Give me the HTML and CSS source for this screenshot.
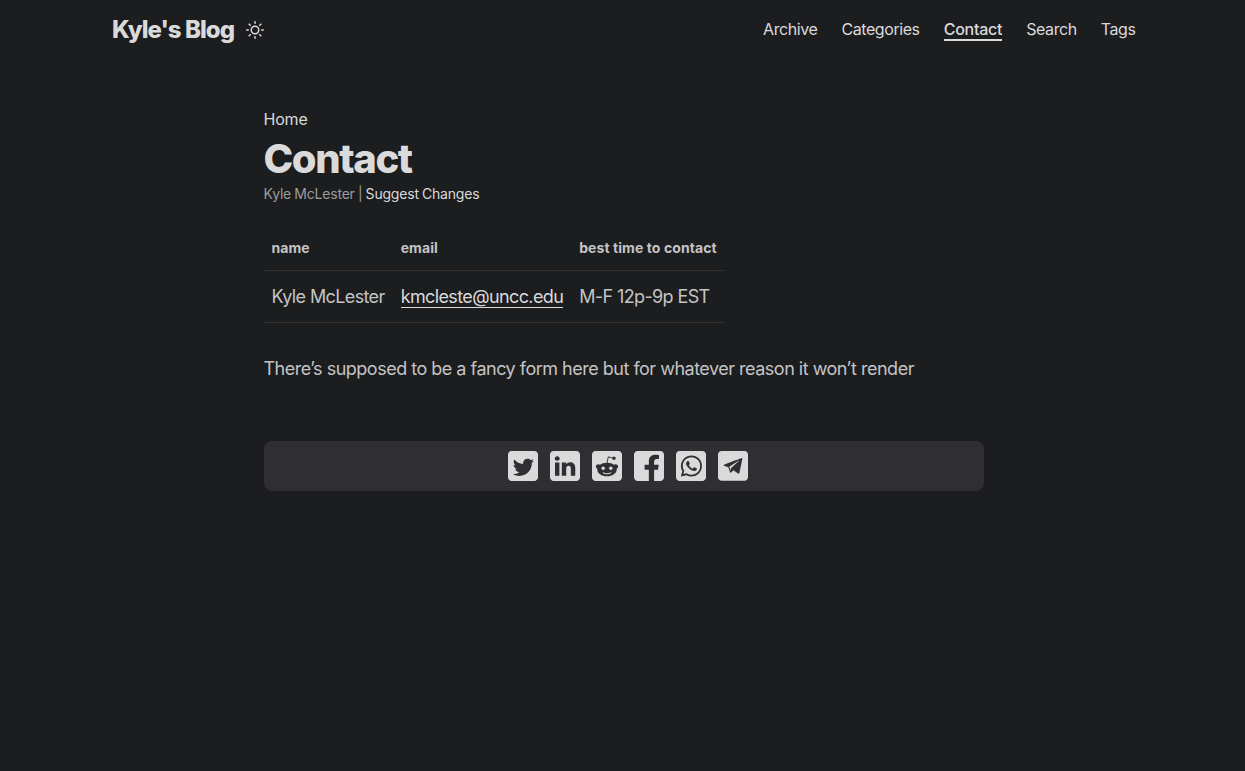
FILE: index.html
```html
<!DOCTYPE html>
<html lang="en">
<head>
  <meta charset="UTF-8" />
  <title>Contact | Kyle's Blog</title>
  <link rel="stylesheet" href="styles.css">
</head>
<body>

  <header class="header">
    <nav class="nav">
      <div class="logo">
        <a href="#">Kyle's Blog</a>
        <button class="theme-toggle" aria-label="Toggle theme">
          <svg viewBox="0 0 24 24" width="18" height="18" fill="none" stroke="currentColor" stroke-width="2" stroke-linecap="round" stroke-linejoin="round">
            <circle cx="12" cy="12" r="5"></circle>
            <line x1="12" y1="1" x2="12" y2="3"></line>
            <line x1="12" y1="21" x2="12" y2="23"></line>
            <line x1="4.22" y1="4.22" x2="5.64" y2="5.64"></line>
            <line x1="18.36" y1="18.36" x2="19.78" y2="19.78"></line>
            <line x1="1" y1="12" x2="3" y2="12"></line>
            <line x1="21" y1="12" x2="23" y2="12"></line>
            <line x1="4.22" y1="19.78" x2="5.64" y2="18.36"></line>
            <line x1="18.36" y1="5.64" x2="19.78" y2="4.22"></line>
          </svg>
        </button>
      </div>
      <ul class="menu">
        <li><a href="#">Archive</a></li>
        <li><a href="#">Categories</a></li>
        <li><a href="#" class="active">Contact</a></li>
        <li><a href="#">Search</a></li>
        <li><a href="#">Tags</a></li>
      </ul>
    </nav>
  </header>

  <main class="main">
    <div class="breadcrumbs"><a href="#">Home</a></div>
    <h1 class="post-title">Contact</h1>
    <div class="post-meta">Kyle McLester&nbsp;|&nbsp;<a href="#">Suggest Changes</a></div>

    <div class="post-content">
      <table class="contact-table">
        <thead>
          <tr>
            <th>name</th>
            <th>email</th>
            <th>best time to contact</th>
          </tr>
        </thead>
        <tbody>
          <tr>
            <td>Kyle McLester</td>
            <td><a href="#">kmcleste@uncc.edu</a></td>
            <td>M-F 12p-9p EST</td>
          </tr>
        </tbody>
      </table>
      <p>There’s supposed to be a fancy form here but for whatever reason it won’t render</p>
    </div>

    <div class="share-buttons">
      <a href="#" aria-label="share on twitter">
        <svg viewBox="0 0 512 512"><path d="M449.446,0c34.525,0 62.554,28.03 62.554,62.554l0,386.892c0,34.524 -28.03,62.554 -62.554,62.554l-386.892,0c-34.524,0 -62.554,-28.03 -62.554,-62.554l0,-386.892c0,-34.524 28.029,-62.554 62.554,-62.554l386.892,0Zm-253.927,424.544c135.939,0 210.268,-112.643 210.268,-210.268c0,-3.218 0,-6.437 -0.153,-9.502c14.406,-10.421 26.973,-23.448 36.935,-38.314c-13.18,5.824 -27.433,9.809 -42.452,11.648c15.326,-9.196 26.973,-23.602 32.49,-40.92c-14.252,8.429 -30.038,14.56 -46.896,17.931c-13.487,-14.406 -32.644,-23.295 -53.946,-23.295c-40.767,0 -73.87,33.104 -73.87,73.87c0,5.824 0.613,11.494 1.992,16.858c-61.456,-3.065 -115.862,-32.49 -152.337,-77.241c-6.284,10.881 -9.962,23.601 -9.962,37.088c0,25.594 13.027,48.276 32.95,61.456c-12.107,-0.307 -23.448,-3.678 -33.41,-9.196l0,0.92c0,35.862 25.441,65.594 59.311,72.49c-6.13,1.686 -12.72,2.606 -19.464,2.606c-4.751,0 -9.348,-0.46 -13.946,-1.38c9.349,29.426 36.628,50.728 68.965,51.341c-25.287,19.771 -57.164,31.571 -91.8,31.571c-5.977,0 -11.801,-0.306 -17.625,-1.073c32.337,21.15 71.264,33.41 112.95,33.41Z"/></svg>
      </a>
      <a href="#" aria-label="share on linkedin">
        <svg viewBox="0 0 512 512"><path d="M449.446,0c34.525,0 62.554,28.03 62.554,62.554l0,386.892c0,34.524 -28.03,62.554 -62.554,62.554l-386.892,0c-34.524,0 -62.554,-28.03 -62.554,-62.554l0,-386.892c0,-34.524 28.029,-62.554 62.554,-62.554l386.892,0Zm-288.985,423.278l0,-225.717l-75.04,0l0,225.717l75.04,0Zm270.539,0l0,-129.439c0,-69.333 -37.018,-101.586 -86.381,-101.586c-39.804,0 -57.634,21.891 -67.617,37.266l0,-31.958l-75.021,0c0.995,21.181 0,225.717 0,225.717l75.02,0l0,-126.056c0,-6.748 0.486,-13.492 2.474,-18.315c5.414,-13.475 17.767,-27.434 38.494,-27.434c27.135,0 38.007,20.707 38.007,51.037l0,120.768l75.024,0Zm-307.552,-334.556c-25.674,0 -42.448,16.879 -42.448,39.002c0,21.658 16.264,39.002 41.455,39.002l0.484,0c26.165,0 42.452,-17.344 42.452,-39.002c-0.485,-22.092 -16.241,-38.954 -41.943,-39.002Z"/></svg>
      </a>
      <a href="#" aria-label="share on reddit">
        <svg viewBox="0 0 512 512"><path d="M449.446,0c34.525,0 62.554,28.03 62.554,62.554l0,386.892c0,34.524 -28.03,62.554 -62.554,62.554l-386.892,0c-34.524,0 -62.554,-28.03 -62.554,-62.554l0,-386.892c0,-34.524 28.029,-62.554 62.554,-62.554l386.892,0Zm-3.446,265.638c0,-22.964 -18.616,-41.58 -41.58,-41.58c-11.211,0 -21.361,4.457 -28.841,11.666c-28.424,-20.508 -67.586,-33.757 -111.204,-35.278l18.941,-89.121l61.884,13.157c0.756,15.734 13.642,28.29 29.56,28.29c16.407,0 29.706,-13.299 29.706,-29.701c0,-16.403 -13.299,-29.702 -29.706,-29.702c-11.666,0 -21.657,6.792 -26.515,16.578l-69.105,-14.69c-1.922,-0.418 -3.939,-0.042 -5.585,1.036c-1.658,1.073 -2.811,2.761 -3.224,4.686l-21.152,99.438c-44.258,1.228 -84.046,14.494 -112.837,35.232c-7.468,-7.164 -17.589,-11.591 -28.757,-11.591c-22.965,0 -41.585,18.616 -41.585,41.58c0,16.896 10.095,31.41 24.568,37.918c-0.639,4.135 -0.99,8.328 -0.99,12.576c0,63.977 74.469,115.836 166.33,115.836c91.861,0 166.334,-51.859 166.334,-115.836c0,-4.218 -0.347,-8.387 -0.977,-12.493c14.564,-6.47 24.735,-21.034 24.735,-38.001Zm-119.474,108.193c-20.27,20.241 -59.115,21.816 -70.534,21.816c-11.428,0 -50.277,-1.575 -70.522,-21.82c-3.007,-3.008 -3.007,-7.882 0,-10.889c3.003,-2.999 7.882,-3.003 10.885,0c12.777,12.781 40.11,17.317 59.637,17.317c19.522,0 46.86,-4.536 59.657,-17.321c3.016,-2.999 7.886,-2.995 10.885,0.008c3.008,3.011 3.003,7.882 -0.008,10.889Zm-5.23,-48.781c-16.373,0 -29.701,-13.324 -29.701,-29.698c0,-16.381 13.328,-29.714 29.701,-29.714c16.378,0 29.706,13.333 29.706,29.714c0,16.374 -13.328,29.698 -29.706,29.698Zm-160.386,-29.702c0,-16.381 13.328,-29.71 29.714,-29.71c16.369,0 29.689,13.329 29.689,29.71c0,16.373 -13.32,29.693 -29.689,29.693c-16.386,0 -29.714,-13.32 -29.714,-29.693Z"/></svg>
      </a>
      <a href="#" aria-label="share on facebook">
        <svg viewBox="0 0 512 512"><path d="M449.446,0c34.525,0 62.554,28.03 62.554,62.554l0,386.892c0,34.524 -28.03,62.554 -62.554,62.554l-106.468,0l0,-192.915l66.6,0l12.672,-82.621l-79.272,0l0,-53.617c0,-22.603 11.073,-44.636 46.58,-44.636l36.042,0l0,-70.34c0,0 -32.71,-5.582 -63.982,-5.582c-65.288,0 -107.96,39.569 -107.96,111.204l0,62.971l-72.573,0l0,82.621l72.573,0l0,192.915l-191.104,0c-34.524,0 -62.554,-28.03 -62.554,-62.554l0,-386.892c0,-34.524 28.029,-62.554 62.554,-62.554l386.892,0Z"/></svg>
      </a>
      <a href="#" aria-label="share on whatsapp">
        <svg viewBox="0 0 512 512"><path d="M449.446,0c34.525,0 62.554,28.03 62.554,62.554l0,386.892c0,34.524 -28.03,62.554 -62.554,62.554l-386.892,0c-34.524,0 -62.554,-28.03 -62.554,-62.554l0,-386.892c0,-34.524 28.029,-62.554 62.554,-62.554l386.892,0Zm-58.673,127.703c-33.842,-33.881 -78.847,-52.548 -126.798,-52.568c-98.799,0 -179.21,80.405 -179.249,179.234c-0.013,31.593 8.241,62.428 23.927,89.612l-25.429,92.884l95.021,-24.925c26.181,14.28 55.659,21.807 85.658,21.816l0.074,0c98.789,0 179.206,-80.413 179.247,-179.243c0.018,-47.895 -18.61,-92.93 -52.451,-126.81Zm-126.797,275.782l-0.06,0c-26.734,-0.01 -52.954,-7.193 -75.828,-20.767l-5.441,-3.229l-56.386,14.792l15.05,-54.977l-3.542,-5.637c-14.913,-23.72 -22.791,-51.136 -22.779,-79.287c0.033,-82.142 66.867,-148.971 149.046,-148.971c39.793,0.014 77.199,15.531 105.329,43.692c28.128,28.16 43.609,65.592 43.594,105.4c-0.034,82.149 -66.866,148.983 -148.983,148.984Zm81.721,-111.581c-4.479,-2.242 -26.499,-13.075 -30.604,-14.571c-4.105,-1.495 -7.091,-2.241 -10.077,2.241c-2.986,4.483 -11.569,14.572 -14.182,17.562c-2.612,2.988 -5.225,3.364 -9.703,1.12c-4.479,-2.241 -18.91,-6.97 -36.017,-22.23c-13.314,-11.876 -22.304,-26.542 -24.916,-31.026c-2.612,-4.484 -0.279,-6.908 1.963,-9.14c2.016,-2.007 4.48,-5.232 6.719,-7.847c2.24,-2.615 2.986,-4.484 4.479,-7.472c1.493,-2.99 0.747,-5.604 -0.374,-7.846c-1.119,-2.241 -10.077,-24.288 -13.809,-33.256c-3.635,-8.733 -7.327,-7.55 -10.077,-7.688c-2.609,-0.13 -5.598,-0.158 -8.583,-0.158c-2.986,0 -7.839,1.121 -11.944,5.604c-4.105,4.484 -15.675,15.32 -15.675,37.364c0,22.046 16.048,43.342 18.287,46.332c2.24,2.99 31.582,48.227 76.511,67.627c10.685,4.615 19.028,7.371 25.533,9.434c10.728,3.41 20.492,2.929 28.209,1.775c8.605,-1.285 26.499,-10.833 30.231,-21.295c3.732,-10.464 3.732,-19.431 2.612,-21.298c-1.119,-1.869 -4.105,-2.99 -8.583,-5.232Z"/></svg>
      </a>
      <a href="#" aria-label="share on telegram">
        <svg viewBox="2 2 28 28"><path d="M26.49,29.86H5.5a3.37,3.37,0,0,1-2.47-1,3.35,3.35,0,0,1-1-2.47V5.48A3.36,3.36,0,0,1,3,3,3.37,3.37,0,0,1,5.5,2h21A3.38,3.38,0,0,1,29,3a3.36,3.36,0,0,1,1,2.46V26.37a3.35,3.35,0,0,1-1,2.47A3.38,3.38,0,0,1,26.49,29.86Zm-5.38-6.71a.79.79,0,0,0,.85-.66L24.73,9.24a.55.55,0,0,0-.18-.46.62.62,0,0,0-.41-.17q-.08,0-16.53,6.11a.59.59,0,0,0-.41.59.57.57,0,0,0,.43.52l4,1.24,1.61,4.83a.62.62,0,0,0,.63.43.56.56,0,0,0,.4-.17L16.54,20l4.09,3A.9.9,0,0,0,21.11,23.15ZM13.8,20.71l-1.21-4q8.72-5.55,8.78-5.55c.15,0,.23,0,.23.16a.18.18,0,0,1,0,.06s-2.51,2.3-7.52,6.8Z"/></svg>
      </a>
    </div>
  </main>

</body>
</html>
```

FILE: styles.css
```css
* {
  box-sizing: border-box;
}
body {
  margin: 0;
  min-height: 100vh;
  background: #1c1d1f;
  color: #dadadb;
  font-family: Inter, "Liberation Sans", sans-serif;
  font-size: 18px;
  line-height: 1.6;
}
a {
  color: inherit;
  text-decoration: none;
}
.nav {
  display: flex;
  justify-content: space-between;
  align-items: center;
  max-width: 1026px;
  height: 60px;
  margin: 0 auto;
  padding: 0 0 0 2.5px;
}
.logo {
  display: flex;
  align-items: center;
  font-size: 24px;
  font-weight: 800;
  letter-spacing: -0.95px;
}
.theme-toggle {
  display: flex;
  margin-left: 12px;
  padding: 0;
  border: none;
  background: none;
  color: inherit;
  cursor: pointer;
}
.menu {
  display: flex;
  gap: 24px;
  margin: 0;
  padding: 0 0 2px;
  list-style: none;
  font-size: 16px;
  line-height: 24px;
  letter-spacing: -0.42px;
}
.menu .active {
  font-weight: 500;
  letter-spacing: -0.25px;
  border-bottom: 2px solid currentColor;
}
.main {
  max-width: 722px;
  margin: 0 auto;
  padding: 46px 0 0 2px;
}
.breadcrumbs {
  font-size: 16px;
  line-height: 26px;
  letter-spacing: -0.2px;
}
.post-title {
  margin: 2px 0 0;
  font-size: 40px;
  font-weight: 800;
  line-height: 49px;
  letter-spacing: -1.4px;
}
.post-meta {
  font-size: 14px;
  line-height: 22px;
  color: #9b9c9d;
  letter-spacing: -0.2px;
  word-spacing: -0.5px;
}
.post-meta a {
  color: #dadadb;
}
.post-content {
  margin-top: 20px;
  color: #c4c4c5;
}
.contact-table {
  border-collapse: collapse;
}
.contact-table th {
  padding: 9px 8px 7px;
  border-bottom: 1px solid #333;
  font-size: 14px;
  font-weight: 700;
  text-align: left;
  height: 45px;
  letter-spacing: 0.08px;
}
.contact-table td {
  padding: 9px 8px 7px;
  border-bottom: 1px solid #333;
  height: 52px;
  letter-spacing: -0.62px;
}
.contact-table a {
  color: #dadadb;
  box-shadow: 0 1px 0 #dadadb;
}
.post-content p {
  margin: 31px 0 0;
  line-height: 30px;
  letter-spacing: -0.5px;
}
.share-buttons {
  display: flex;
  justify-content: center;
  gap: 12px;
  margin-top: 57px;
  padding: 10px 10px 10px 19px;
  border-radius: 8px;
  background: #2e2e33;
}
.share-buttons a {
  display: flex;
}
.share-buttons svg {
  width: 30px;
  height: 30px;
  fill: #dadadb;
  fill-rule: evenodd;
}
```
